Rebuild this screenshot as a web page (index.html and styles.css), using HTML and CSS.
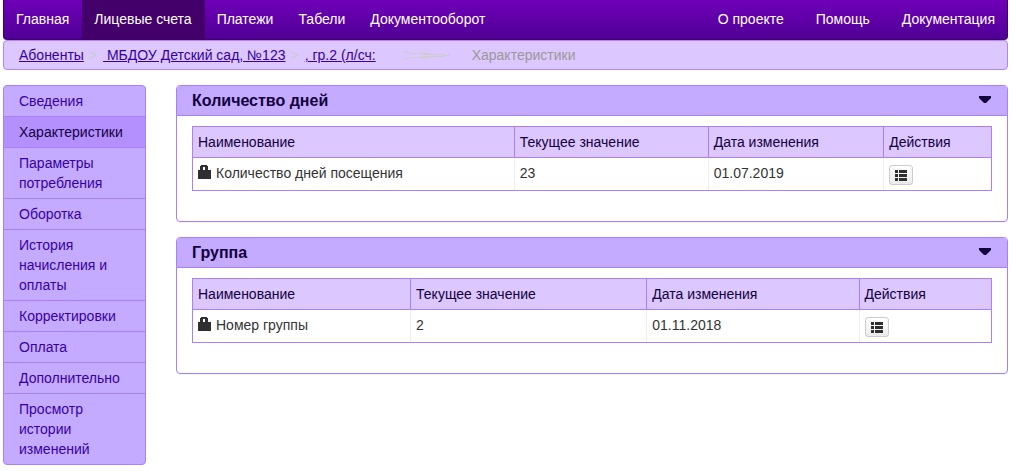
FILE: index.html
```html
<!DOCTYPE html>
<html lang="ru">
<head>
<meta charset="utf-8">
<title>Характеристики</title>
<link rel="stylesheet" href="styles.css">
</head>
<body>
<svg class="sprite" aria-hidden="true">
  <symbol id="lock" viewBox="0 0 13 14"><path fill-rule="evenodd" d="M0 5h2V1h1V0h6v1h1v4h3v9H0zM5 2v3h2V2z"/></symbol>
  <symbol id="list" viewBox="0 0 12 11"><path d="M0 0h3v3H0zM4 0h8v3H4zM0 4h3v3H0zM4 4h8v3H4zM0 8h3v3H0zM4 8h8v3H4z"/></symbol>
  <symbol id="caret" viewBox="0 0 12 7"><path d="M0 0h12v2L7 7H5L0 2z"/></symbol>
</svg>
<nav class="navbar">
  <div class="nav-group">
    <a class="nav-link" href="#">Главная</a>
    <a class="nav-link active" href="#">Лицевые счета</a>
    <a class="nav-link" href="#">Платежи</a>
    <a class="nav-link" href="#">Табели</a>
    <a class="nav-link" href="#">Документооборот</a>
  </div>
  <div class="nav-group nav-right">
    <a class="nav-link" href="#">О проекте</a>
    <a class="nav-link" href="#">Помощь</a>
    <a class="nav-link" href="#">Документация</a>
  </div>
</nav>
<nav class="breadcrumb">
  <a href="#">Абоненты</a>
  <span class="sep">&gt;</span>
  <a href="#">&nbsp;МБДОУ Детский сад, №123</a>
  <span class="sep">&gt;</span>
  <a href="#">, гр.2 (л/сч:</a>
  <svg class="mark" width="46" height="8" viewBox="0 0 46 8" fill="none"><path d="M0 1.5h6M6 2.5h20M18 3.5h22M38 4.5h8M18 5.5h22M6 6.5h20M0 7.5h6"/></svg>
  <span class="current">Характеристики</span>
</nav>
<div class="layout">
  <nav class="sidebar">
    <a href="#">Сведения</a>
    <a class="active" href="#">Характеристики</a>
    <a href="#">Параметры потребления</a>
    <a href="#">Оборотка</a>
    <a href="#">История начисления и оплаты</a>
    <a href="#">Корректировки</a>
    <a href="#">Оплата</a>
    <a href="#">Дополнительно</a>
    <a href="#">Просмотр истории изменений</a>
  </nav>
  <main class="content">
    <section class="panel">
      <header class="panel-head"><h2>Количество дней</h2><button class="toggle" type="button" aria-label="Свернуть"><svg width="12" height="7"><use href="#caret"/></svg></button></header>
      <div class="panel-body">
        <table class="days">
          <thead><tr><th class="name">Наименование</th><th class="value">Текущее значение</th><th class="date">Дата изменения</th><th>Действия</th></tr></thead>
          <tbody><tr><td><svg class="lock" width="13" height="14"><use href="#lock"/></svg>Количество дней посещения</td><td>23</td><td>01.07.2019</td><td><button class="action" type="button" aria-label="История"><svg width="12" height="11"><use href="#list"/></svg></button></td></tr></tbody>
        </table>
      </div>
    </section>
    <section class="panel">
      <header class="panel-head"><h2>Группа</h2><button class="toggle" type="button" aria-label="Свернуть"><svg width="12" height="7"><use href="#caret"/></svg></button></header>
      <div class="panel-body">
        <table class="group">
          <thead><tr><th class="name">Наименование</th><th class="value">Текущее значение</th><th class="date">Дата изменения</th><th>Действия</th></tr></thead>
          <tbody><tr><td><svg class="lock" width="13" height="14"><use href="#lock"/></svg>Номер группы</td><td>2</td><td>01.11.2018</td><td><button class="action" type="button" aria-label="История"><svg width="12" height="11"><use href="#list"/></svg></button></td></tr></tbody>
        </table>
      </div>
    </section>
  </main>
</div>
</body>
</html>
```
FILE: styles.css
```css
* { box-sizing: border-box; }
body {
  margin: 0 9px 0 3px;
  background: #fff;
  color: #333;
  font: 14px/20px "Liberation Sans", Arial, sans-serif;
}
a { color: #3700a4; text-decoration: none; }
.sprite { display: none; }

.navbar {
  display: flex;
  justify-content: space-between;
  height: 40px;
  background: linear-gradient(#6f00b8, #4f0096);
  border: 1px solid #43006b;
  border-top: 0;
  border-radius: 0 0 4px 4px;
}
.nav-group { display: flex; }
.nav-link { padding: 9px 13px 10px 12px; color: #fff; }
.nav-link.active { background: #43006b; }
.nav-right .nav-link { padding: 9px 16px 10px; }
.nav-right .nav-link:last-child { padding-right: 12px; }

.breadcrumb {
  display: flex;
  align-items: center;
  height: 30px;
  padding: 0 15px;
  background: #dcc7ff;
  border: 1px solid #ae84ff;
  border-radius: 4px;
}
.breadcrumb a { text-decoration: underline; white-space: pre; }
.sep { padding: 0 6px 0 5px; color: #ccc; }
.mark { margin: 0 22px 0 28px; stroke: #ccc; }
.current { color: #999; }

.layout { display: flex; align-items: flex-start; gap: 30px; margin-top: 15px; }
.sidebar {
  width: 143px;
  flex: none;
  border: 1px solid #a880ff;
  border-radius: 4px;
  background: #c4abff;
  overflow: hidden;
}
.sidebar a { display: block; padding: 5px 15px; }
.sidebar a + a { border-top: 1px solid #a880ff; }
.sidebar .active { background: #b490ff; color: #12003d; }

.content { flex: 1; display: flex; flex-direction: column; gap: 15px; min-width: 0; }
.panel {
  border: 1px solid #a880ff;
  border-radius: 4px;
  box-shadow: 0 1px 1px rgba(0, 0, 0, 0.05);
  overflow: hidden;
}
.panel-head {
  display: flex;
  align-items: center;
  justify-content: space-between;
  padding: 5px 15px 4px;
  background: #c4abff;
  border-bottom: 1px solid #a880ff;
}
h2 { margin: 0; color: #12003d; font-size: 16px; line-height: 20px; }
.toggle { display: flex; padding: 0 1px 3px; border: 0; background: none; fill: #12003d; }
.panel-body { padding: 10px 15px 30px; }

table { width: 100%; table-layout: fixed; border: 1px solid #a880ff; border-spacing: 0; }
th, td { padding: 5px; text-align: left; vertical-align: top; }
th { height: 31px; background: #dcc7ff; border-bottom: 1px solid #a880ff; color: #12003d; font-weight: normal; }
th + th { border-left: 1px solid #a880ff; }
td { height: 32px; }
td + td { border-left: 1px solid #eee; }
.days .name { width: 40.2%; }
.days .value { width: 24.3%; }
.days .date { width: 22%; }
.group .name { width: 27.2%; }
.group .value { width: 29.6%; }
.group .date { width: 26.6%; }
.lock { margin-right: 5px; vertical-align: -1px; fill: #2f2f2f; }
.action {
  display: flex;
  align-items: center;
  justify-content: center;
  width: 24px;
  height: 20px;
  margin-top: 2px;
  padding: 0;
  border: 1px solid #ccc;
  border-radius: 3px;
  background: linear-gradient(#fff, #ebebeb);
  fill: #2f2f2f;
}
```
